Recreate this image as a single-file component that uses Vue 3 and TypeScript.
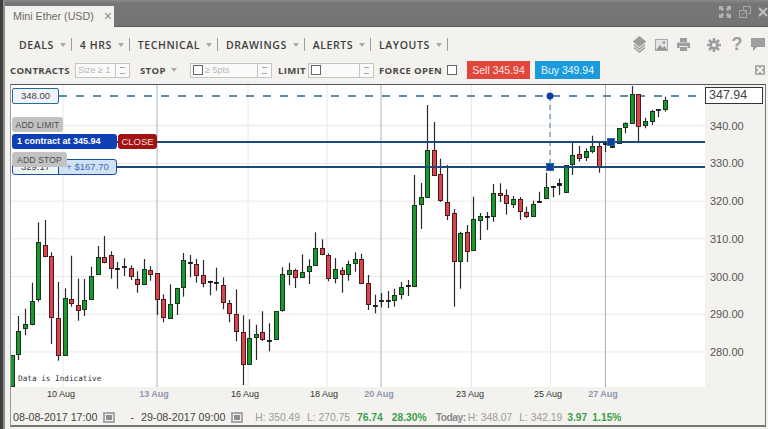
<script setup lang="ts">
// [high, bodyTop, bodyBottom, low, kind] in page pixels; g = up, r = down, d = doji
type Kind = "g" | "r" | "d";
type Candle = [number, number, number, number, Kind];

const PLOT_X = 11;
const PLOT_Y = 85;

const candles: Candle[] = [
  [355, 355, 386, 386, "g"], [316, 330.7, 354, 360, "g"], [308.7, 324.3, 328, 335.3, "g"], [282.7, 301, 324, 325.3, "g"],
  [222.3, 242.3, 299.3, 301.7, "g"], [220, 244.7, 256, 257.3, "r"], [252.3, 256, 317.3, 344, "r"], [282, 318.3, 355.7, 360.7, "r"],
  [288.3, 298.3, 355.7, 355.7, "g"], [255.7, 299.3, 303.3, 306.7, "r"], [278.7, 304.7, 309.7, 320.7, "r"], [279, 300.3, 309.7, 316, "g"],
  [266.7, 276, 299.3, 299.3, "g"], [246, 257, 274.3, 274.7, "g"], [236, 256.7, 261.7, 263.3, "r"], [251.3, 255.3, 268.3, 278.7, "r"],
  [262, 268.3, 269, 288.7, "d"], [258.3, 266.3, 267.3, 276, "d"], [265.3, 268.3, 276.7, 280, "r"], [271.3, 279.3, 284, 292.7, "r"],
  [259, 269, 284, 284.3, "g"], [266, 269.7, 273.7, 280.7, "r"], [273.3, 273.3, 299.3, 315, "r"], [294.3, 299.3, 317.7, 322.3, "r"],
  [284.3, 303.7, 317.7, 318, "g"], [287.7, 288, 302.7, 315, "g"], [253, 260.3, 287.3, 296.7, "g"], [255, 262, 263, 277.3, "d"],
  [259, 263.7, 274.7, 282.7, "r"], [260, 275, 283, 287.3, "r"], [280.7, 281, 282, 295.3, "d"], [267.7, 282, 283.3, 290.7, "d"],
  [277.3, 284.7, 302, 309.3, "r"], [300, 303.3, 313.3, 322.3, "r"], [289.3, 314.3, 331.7, 341.3, "r"], [315.3, 332.3, 364.3, 385, "r"],
  [319.3, 338.3, 364.7, 365, "g"], [324.7, 334, 337.3, 360, "g"], [311.3, 332.3, 339.3, 341, "r"], [323.3, 340, 340.7, 351.3, "d"],
  [311.3, 311.3, 339.3, 339.3, "g"], [267.3, 274.3, 310.7, 311.7, "g"], [262.7, 269.7, 273.7, 285.3, "g"], [268.7, 270, 276.7, 288, "r"],
  [254.3, 272.3, 277, 278, "g"], [259.3, 266.3, 271.7, 284, "g"], [232.3, 248.3, 265.7, 266, "g"], [239.3, 248.3, 254.3, 255.3, "r"],
  [253.3, 255, 277.7, 281.3, "r"], [258, 269, 277.7, 283.3, "g"], [267.3, 270, 273.7, 292.7, "r"], [260.7, 263.7, 273.7, 280.7, "g"],
  [252.3, 259.3, 263, 271.7, "g"], [253.7, 258.7, 282.3, 283.3, "r"], [275, 283, 304.3, 310, "r"], [294.7, 304.7, 305.7, 313.3, "d"],
  [293, 300.3, 301.3, 307.3, "d"], [291, 300.3, 301.3, 308, "d"], [288.7, 295, 299.7, 306.7, "g"], [282, 287.3, 294.3, 299.3, "g"],
  [280, 285.3, 286.3, 296, "d"], [175, 204.7, 285.3, 286.7, "g"], [183, 197, 203.7, 229, "g"], [105, 150, 196.7, 196.7, "g"],
  [122, 150, 175, 176, "r"], [158.7, 174.3, 200.7, 202, "r"], [165, 201.7, 214.3, 220, "r"], [209, 213, 261, 306.7, "r"],
  [231.7, 233, 261, 288.7, "g"], [225, 232, 250.7, 262, "r"], [196.7, 219, 250, 250, "g"], [213, 215.7, 219.7, 240, "g"],
  [212, 216, 217, 230, "d"], [184, 192.7, 216, 221.7, "g"], [183.3, 192.7, 194.7, 202, "r"], [189.3, 195, 203.3, 214.7, "r"],
  [196, 198.7, 203.7, 208, "g"], [197, 198.7, 211, 220, "r"], [206.7, 211.7, 216, 218, "r"], [200.7, 204, 216, 217, "g"],
  [191.7, 200.6, 201.7, 203, "d"], [172.7, 187.3, 198.7, 199.3, "g"], [185.7, 186, 187, 197.3, "d"], [178.7, 183.3, 185, 195, "d"],
  [165, 165, 191.7, 191.7, "g"], [142.7, 155.3, 164.7, 175, "g"], [146, 154, 157.7, 161.7, "r"], [148.3, 151, 157, 161, "g"],
  [135.7, 145.7, 150.7, 153.3, "g"], [143, 145.7, 165.3, 172.7, "r"], [142, 143, 144, 152, "d"], [146, 146, 147, 148, "d"],
  [128.3, 128.3, 143.3, 143.3, "g"], [122.3, 123.3, 127.3, 133.3, "g"], [86, 94, 122.7, 123.3, "g"], [94, 94, 126, 142, "r"],
  [117.7, 121.3, 125.3, 128.3, "g"], [110, 110.7, 120.7, 125, "g"], [109.3, 109.3, 110.2, 117.3, "d"], [96.7, 100, 108.7, 111.7, "g"],
];

const bars = candles.map((c, i) => ({
  x: Math.round(11.8 + 6.595 * i),
  high: c[0],
  top: Math.round(c[1]) + 0.5,
  height: Math.max(Math.round(c[2] - c[1]), 1),
  low: c[3],
  kind: c[4],
}));

const priceLabels = [340, 330, 320, 310, 300, 290, 280].map((p) => ({
  text: p.toFixed(2),
  y: 125.7 + (340 - p) * 3.77,
}));

const minorV = [63, 248, 327, 471.5, 550.5];
const majorV = [157, 381, 605.5];

const dates = [
  { text: "10 Aug", x: 61, major: false },
  { text: "13 Aug", x: 154, major: true },
  { text: "16 Aug", x: 245, major: false },
  { text: "18 Aug", x: 324, major: false },
  { text: "20 Aug", x: 379, major: true },
  { text: "23 Aug", x: 470, major: false },
  { text: "25 Aug", x: 548, major: false },
  { text: "27 Aug", x: 603, major: true },
];

const menu = ["DEALS", "4 HRS", "TECHNICAL", "DRAWINGS", "ALERTS", "LAYOUTS"];
</script>

<template>
  <div class="window">
    <header class="titlebar">
      <div class="tab">
        <span>Mini Ether (USD)</span>
        <span class="tab-x">×</span>
      </div>
      <div class="win-icons">
        <svg width="12" height="12" viewBox="0 0 12 12" fill="#b4b4b4">
          <path d="M0 0h4.500L3.300 1.200 5.200 3.100 3.100 5.200 1.200 3.300 0 4.500zM12 0v4.500L10.800 3.300 8.900 5.200 6.800 3.100 8.700 1.200 7.500 0zM0 12V7.500l1.200 1.200 1.900-1.900 2.100 2.100-1.900 1.900L4.500 12zM12 12H7.500l1.200-1.200-1.900-1.900 2.100-2.100 1.900 1.900L12 7.500z" />
        </svg>
        <svg class="pop" width="12" height="12" viewBox="0 0 12 12" fill="none" stroke="#a8a8a8">
          <path d="M4.500 3.500V.5h7v7H8.500M.5 4.500h7v7h-7zM3 9l5-5" />
        </svg>
        <svg class="win-x" width="10" height="10" viewBox="0 0 10 10" stroke="#c0c0c0" stroke-width="2">
          <path d="M1 1l8 8M9 1l-8 8" />
        </svg>
      </div>
    </header>

    <nav class="menu">
      <div v-for="m in menu" :key="m" class="menu-item">
        <span>{{ m }}</span>
        <i class="caret"></i>
        <i class="sep"></i>
      </div>
      <div class="tools">
        <svg class="t-layers" width="13" height="17" viewBox="0 0 13 17" fill="none" stroke="#9c9c9c" stroke-width="1.600">
          <path d="M6.500 1L12 5.500 6.500 10 1 5.500z" fill="#9c9c9c" />
          <path d="M1 8.500l5.500 4.500 5.500-4.500M1 11.500L6.500 16l5.500-4.500" />
        </svg>
        <svg class="t-image" width="13" height="12" viewBox="0 0 13 12">
          <rect width="13" height="12" fill="#a8a8a8" />
          <rect x="1" y="1" width="11" height="10" fill="#e4e4e2" />
          <path d="M1 11l4-5 2.500 3 2-2 2.500 4z" fill="#969696" />
          <circle cx="9" cy="3.500" r="1.300" fill="#969696" />
        </svg>
        <svg class="t-print" width="13" height="13" viewBox="0 0 13 13" fill="#9e9e9e">
          <path d="M3 0h7v4H3z" />
          <path d="M1.500 4.500h10A1.500 1.500 0 0 1 13 6v4h-2.500V8h-8v2H0V6a1.500 1.500 0 0 1 1.500-1.500z" />
          <path d="M3 9h7v4H3z" />
        </svg>
        <svg class="t-gear" width="14" height="14" viewBox="0 0 14 14">
          <g stroke="#9e9e9e" stroke-width="2.500">
            <path d="M7 0v14M0 7h14M2 2l10 10M12 2L2 12" />
          </g>
          <circle cx="7" cy="7" r="4.500" fill="#9e9e9e" />
          <circle cx="7" cy="7" r="2" fill="#f4f2ee" />
        </svg>
        <span class="t-help">?</span>
        <svg class="t-chat" width="14" height="13" viewBox="0 0 14 13" fill="#9e9e9e">
          <path d="M0 0h14v9H6l-4 4V9H0z" />
        </svg>
      </div>
    </nav>

    <div class="order-row">
      <label class="lbl contracts">CONTRACTS</label>
      <div class="field f-size"><span class="ph">Size ≥ 1</span><span class="spin"></span></div>
      <label class="lbl stop">STOP</label>
      <i class="caret stop-caret"></i>
      <div class="field f-stop"><i class="check"></i><span class="ph">≥ 5pts</span><span class="spin"></span></div>
      <label class="lbl limit">LIMIT</label>
      <div class="field f-limit"><i class="check"></i><span class="spin"></span></div>
      <label class="lbl force">FORCE OPEN</label>
      <i class="check force-check"></i>
      <button class="deal sell">Sell 345.94</button>
      <button class="deal buy">Buy 349.94</button>
      <svg class="row-close" width="10" height="10" viewBox="0 0 10 10">
        <rect width="10" height="10" fill="#a9a9a9" />
        <path d="M2 2l6 6M8 2L2 8" stroke="#f4f2ee" stroke-width="2" />
      </svg>
    </div>

    <section class="frame">
      <div class="chart-row">
        <div class="plot">
          <svg width="694" height="302" :viewBox="`${PLOT_X} ${PLOT_Y} 694 302`">
            <line v-for="p in priceLabels" :key="p.text" x1="11" x2="705" :y1="p.y" :y2="p.y" class="grid" />
            <line v-for="x in minorV" :key="x" :x1="x" :x2="x" y1="85" y2="387" class="grid" />
            <line v-for="x in majorV" :key="x" :x1="x" :x2="x" y1="85" y2="387" class="grid-major" />

            <line x1="59" x2="705" y1="96" y2="96" class="dash" />
            <line x1="550" x2="550" y1="96" y2="167" class="dash-v" />

            <g v-for="(b, i) in bars" :key="i">
              <line :x1="b.x + 0.5" :x2="b.x + 0.5" :y1="b.high" :y2="b.low" class="wick" />
              <rect
                :x="b.x - 1.5"
                :y="b.top"
                width="4"
                :height="b.height"
                :class="['body', b.kind]"
              />
            </g>

            <line x1="117" x2="705" y1="142" y2="142" class="level" />
            <line x1="117" x2="705" y1="167" y2="167" class="level" />
            <circle cx="550" cy="96" r="3.500" fill="#0f3f9c" />
            <rect x="546.500" y="163.500" width="7" height="7" fill="#0f3f9c" stroke="#2a6a9a" />
            <rect x="607.500" y="138.500" width="7" height="7" fill="#0f3f9c" stroke="#2a6a9a" />
          </svg>

          <div class="tag tag-limit">348.00</div>
          <button class="add add-limit">ADD LIMIT</button>
          <div class="position">1 contract at 345.94</div>
          <button class="close">CLOSE</button>
          <div class="tag tag-stop">329.17</div>
          <div class="pnl">+ $167.70</div>
          <button class="add add-stop">ADD STOP</button>
          <div class="indicative">Data is Indicative</div>
        </div>
        <div class="axis">
          <div class="last">347.94</div>
          <span
            v-for="p in priceLabels"
            :key="p.text"
            class="price"
            :style="{ top: p.y - PLOT_Y - 7 + 'px' }"
          >{{ p.text }}</span>
        </div>
      </div>

      <div class="dates">
        <span
          v-for="d in dates"
          :key="d.text"
          class="date"
          :class="{ major: d.major }"
          :style="{ left: d.x - PLOT_X + 'px' }"
        >{{ d.text }}</span>
      </div>

      <footer class="status">
        <span class="range">08-08-2017 17:00</span>
        <i class="cal cal-a"></i>
        <span class="range dash-sep">-</span>
        <span class="range">29-08-2017 09:00</span>
        <i class="cal cal-b"></i>
        <span class="stat s-h">H: 350.49</span>
        <span class="stat s-l">L: 270.75</span>
        <b class="gain g-1">76.74</b>
        <b class="gain g-2">28.30%</b>
        <b class="today">Today:</b>
        <span class="stat s-th">H: 348.07</span>
        <span class="stat s-l">L: 342.19</span>
        <b class="gain g-3">3.97</b>
        <b class="gain g-3">1.15%</b>
      </footer>
    </section>
  </div>
</template>

<style scoped>
.window {
  width: 768px;
  height: 429px;
  box-sizing: border-box;
  display: flex;
  flex-direction: column;
  overflow: hidden;
  background: #f4f2ee;
  border-left: 3px solid #3f3f3f;
  font-family: "Liberation Sans", Arial, sans-serif;
  box-shadow: inset 2px 0 0 #8d8d8d;
}

.titlebar {
  flex: none;
  height: 27px;
  margin-left: 2px;
  display: flex;
  align-items: flex-end;
  justify-content: space-between;
  background: linear-gradient(#8a8a8a, #767676 3px, #747474);
  border-bottom: 1px solid #5e5e5e;
  box-sizing: border-box;
}

.tab {
  flex: none;
  width: 109px;
  height: 21px;
  margin-bottom: -1px;
  padding: 0 0 2px 8px;
  box-sizing: border-box;
  display: flex;
  align-items: center;
  background: #f4f2ee;
  color: #6a6a6a;
  font-size: 10.700px;
  white-space: nowrap;
}

.tab-x {
  margin-left: 10px;
  font-size: 14px;
  color: #8a8a8a;
}

.win-icons {
  display: flex;
  align-items: center;
  height: 27px;
  padding-bottom: 2px;
  box-sizing: border-box;
}

.pop { margin-left: 8px; }
.win-x { margin-left: 7px; }

.menu {
  flex: none;
  height: 31px;
  padding: 4px 0 0 16px;
  box-sizing: border-box;
  display: flex;
  align-items: center;
  font-family: "Open Sans", sans-serif;
  font-size: 10.500px;
  font-weight: 600;
  letter-spacing: 0.600px;
  color: #3e3e3e;
}

.menu-item {
  display: flex;
  align-items: center;
}

.caret {
  display: block;
  width: 0;
  height: 0;
  margin-left: 6px;
  border-left: 3px solid transparent;
  border-right: 3px solid transparent;
  border-top: 4px solid #a9a9a9;
}

.sep {
  display: block;
  width: 1px;
  height: 13px;
  margin: 0 7.800px 0 5px;
  background: #9c9c9c;
}

.tools {
  margin-left: auto;
  padding-right: 3px;
  display: flex;
  align-items: center;
}

.t-image { margin-left: 9px; }
.t-print { margin-left: 9px; }
.t-gear { margin-left: 17px; }

.t-help {
  width: 12px;
  margin-left: 10px;
  font: bold 18px "Liberation Sans", sans-serif;
  letter-spacing: 0;
  color: #9e9e9e;
  text-align: center;
}

.t-chat { margin-left: 8px; }

.order-row {
  flex: none;
  height: 26px;
  padding-bottom: 2px;
  box-sizing: border-box;
  display: flex;
  align-items: center;
  position: relative;
}

.lbl {
  font-family: "Open Sans", sans-serif;
  font-size: 9.600px;
  font-weight: 700;
  letter-spacing: 0.300px;
  color: #4a4a4a;
  white-space: nowrap;
}

.contracts { margin-left: 7px; width: 65px; }
.stop { margin-left: 10px; width: 31px; }
.stop-caret { margin-left: 0; }
.limit { margin-left: 6px; width: 30px; }
.force { margin-left: 5px; width: 68px; }

.field {
  height: 15px;
  box-sizing: border-box;
  position: relative;
  display: flex;
  align-items: center;
  background: #fbfaf8;
  border: 1px solid #c4c4c4;
}

.f-size { width: 55px; padding-left: 0; }
.f-stop { width: 82px; margin-left: 13px; padding-left: 2px; }
.f-limit { width: 66px; padding-left: 2px; }

.ph {
  margin-left: 2px;
  font-size: 9px;
  color: #b8b8b8;
}

.spin {
  position: absolute;
  right: 0;
  top: 0;
  bottom: 0;
  width: 13px;
  border-left: 1px solid #c4c4c4;
  background:
    linear-gradient(#a8a8a8, #a8a8a8) center 3px / 5px 1px no-repeat,
    linear-gradient(#a8a8a8, #a8a8a8) center 9px / 5px 1px no-repeat;
}

.check {
  flex: none;
  display: block;
  width: 10px;
  height: 10px;
  box-sizing: border-box;
  border: 1px solid #666;
  background: #fff;
}

.deal {
  height: 18px;
  padding: 0;
  border: 0;
  color: #fbe9e6;
  font: 10.500px "Liberation Sans", sans-serif;
}

.sell { width: 63px; margin-left: 10px; background: #e2453a; }
.buy { width: 65px; margin-left: 5px; background: #1c9bdc; color: #e6f5fc; }
.row-close { position: absolute; left: 752px; top: 7px; }

.frame {
  flex: none;
  width: 756px;
  height: 343px;
  margin-left: 7px;
  box-sizing: border-box;
  display: flex;
  flex-direction: column;
  border: 1px solid #555;
  border-right-color: #777;
  border-bottom: 2px solid #777;
  border-left: 1px solid #999;
}

.chart-row {
  flex: none;
  height: 302px;
  display: flex;
}

.plot {
  flex: none;
  position: relative;
  width: 694px;
  height: 302px;
  background: #fff;
}

.plot svg { display: block; }

.grid { stroke: #e8e8e8; stroke-width: 1; }
.grid-major { stroke: #aab3c2; stroke-width: 1; }
.dash { stroke: #5f8aa8; stroke-width: 2; stroke-dasharray: 8 9; }
.dash-v { stroke: #7fa0c0; stroke-width: 1.500; stroke-dasharray: 5 4; }
.wick { stroke: #2a2a2a; stroke-width: 1.200; }
.level { stroke: #1c4a78; stroke-width: 2; }
.body { stroke: #1d3320; stroke-width: 1; }
.body.g { fill: #17992b; }
.body.r { fill: #d9454d; stroke: #4a1a1c; }
.body.d { fill: #111; stroke: #111; stroke-width: 0.800; }

.tag {
  position: absolute;
  box-sizing: border-box;
  background: #eef4fa;
  border: 1px solid #2a6a9a;
  color: #444;
  font-size: 9.500px;
  text-align: center;
}

.tag-limit {
  left: 1px;
  top: 3px;
  width: 47px;
  height: 16px;
  line-height: 14px;
  border-radius: 2px;
}

.tag-stop {
  left: 1px;
  top: 74px;
  width: 47px;
  height: 16px;
  line-height: 14px;
  border-radius: 3px 0 0 3px;
  border-color: #1a4fa0;
}

.pnl {
  position: absolute;
  left: 47px;
  top: 74px;
  width: 59px;
  height: 16px;
  box-sizing: border-box;
  background: #cfe2f8;
  border: 1px solid #1a4fa0;
  border-radius: 0 3px 3px 0;
  color: #3f6fa5;
  font-size: 9.500px;
  line-height: 14px;
  text-align: center;
}

.add {
  position: absolute;
  left: 1px;
  height: 15px;
  padding: 0;
  border: 0;
  border-radius: 3px;
  background: #c2c2c2;
  color: #4d4d4d;
  font: 8.500px "Liberation Sans", sans-serif;
  letter-spacing: 0.200px;
}

.add-limit { top: 32px; width: 51px; }
.add-stop { top: 67px; width: 55px; }

.position {
  position: absolute;
  left: 1px;
  top: 49px;
  width: 105px;
  height: 15px;
  padding-left: 5px;
  box-sizing: border-box;
  border-radius: 3px;
  background: #0f3fb5;
  color: #fff;
  font-size: 9px;
  font-weight: 700;
  line-height: 15px;
  white-space: nowrap;
}

.close {
  position: absolute;
  left: 107px;
  top: 49px;
  width: 39px;
  height: 15px;
  padding: 0;
  border: 0;
  border-radius: 3px;
  background: #a31212;
  color: #f3dede;
  font: 9.500px "Liberation Sans", sans-serif;
}

.indicative {
  position: absolute;
  left: 7px;
  top: 289px;
  font-family: "DejaVu Sans Mono", monospace;
  font-size: 7.700px;
  line-height: 10px;
  color: #333;
  white-space: nowrap;
}

.axis {
  flex: 1;
  position: relative;
}

.last {
  position: absolute;
  left: 0;
  top: 2px;
  width: 58px;
  height: 17px;
  padding-left: 3px;
  box-sizing: border-box;
  background: #fff;
  border: 1px solid #333;
  color: #444;
  font-size: 12.500px;
  line-height: 15px;
}

.price {
  position: absolute;
  left: 5px;
  font-size: 11px;
  line-height: 14px;
  color: #555;
}

.dates {
  flex: none;
  height: 17px;
  position: relative;
}

.date {
  position: absolute;
  top: 1px;
  transform: translateX(-50%);
  font-size: 9px;
  line-height: 12px;
  color: #333;
  white-space: nowrap;
}

.date.major {
  color: #8f97b3;
  font-weight: 700;
}

.status {
  flex: 1;
  padding: 5px 0 0 2px;
  box-sizing: border-box;
  display: flex;
  align-items: center;
  font-size: 10.700px;
  color: #444;
  white-space: nowrap;
}

.cal {
  flex: none;
  display: block;
  width: 12px;
  height: 11px;
  box-sizing: border-box;
  border: 2px solid #a8a8a8;
  background: #8f8f8f;
  box-shadow: inset 0 0 0 1px #f0eeea;
}

.cal-a { margin-left: 6px; }
.cal-b { margin-left: 6px; }
.dash-sep { margin: 0 7px 0 15px; }

.stat {
  font-size: 10.300px;
  color: #9a9a9a;
}

.s-h { margin-left: 12px; }
.s-l { margin-left: 7px; }
.s-th { margin-left: 2px; }

.gain {
  font-size: 10.300px;
  color: #3aa04a;
}

.g-1 { margin-left: 7px; }
.g-2 { margin-left: 9px; }
.g-3 { margin-left: 5px; }

.today {
  margin-left: 9px;
  font-size: 10.300px;
  letter-spacing: -0.500px;
  color: #8a8a8a;
}
</style>

<style>
body {
  background: #f4f2ee;
}
</style>
